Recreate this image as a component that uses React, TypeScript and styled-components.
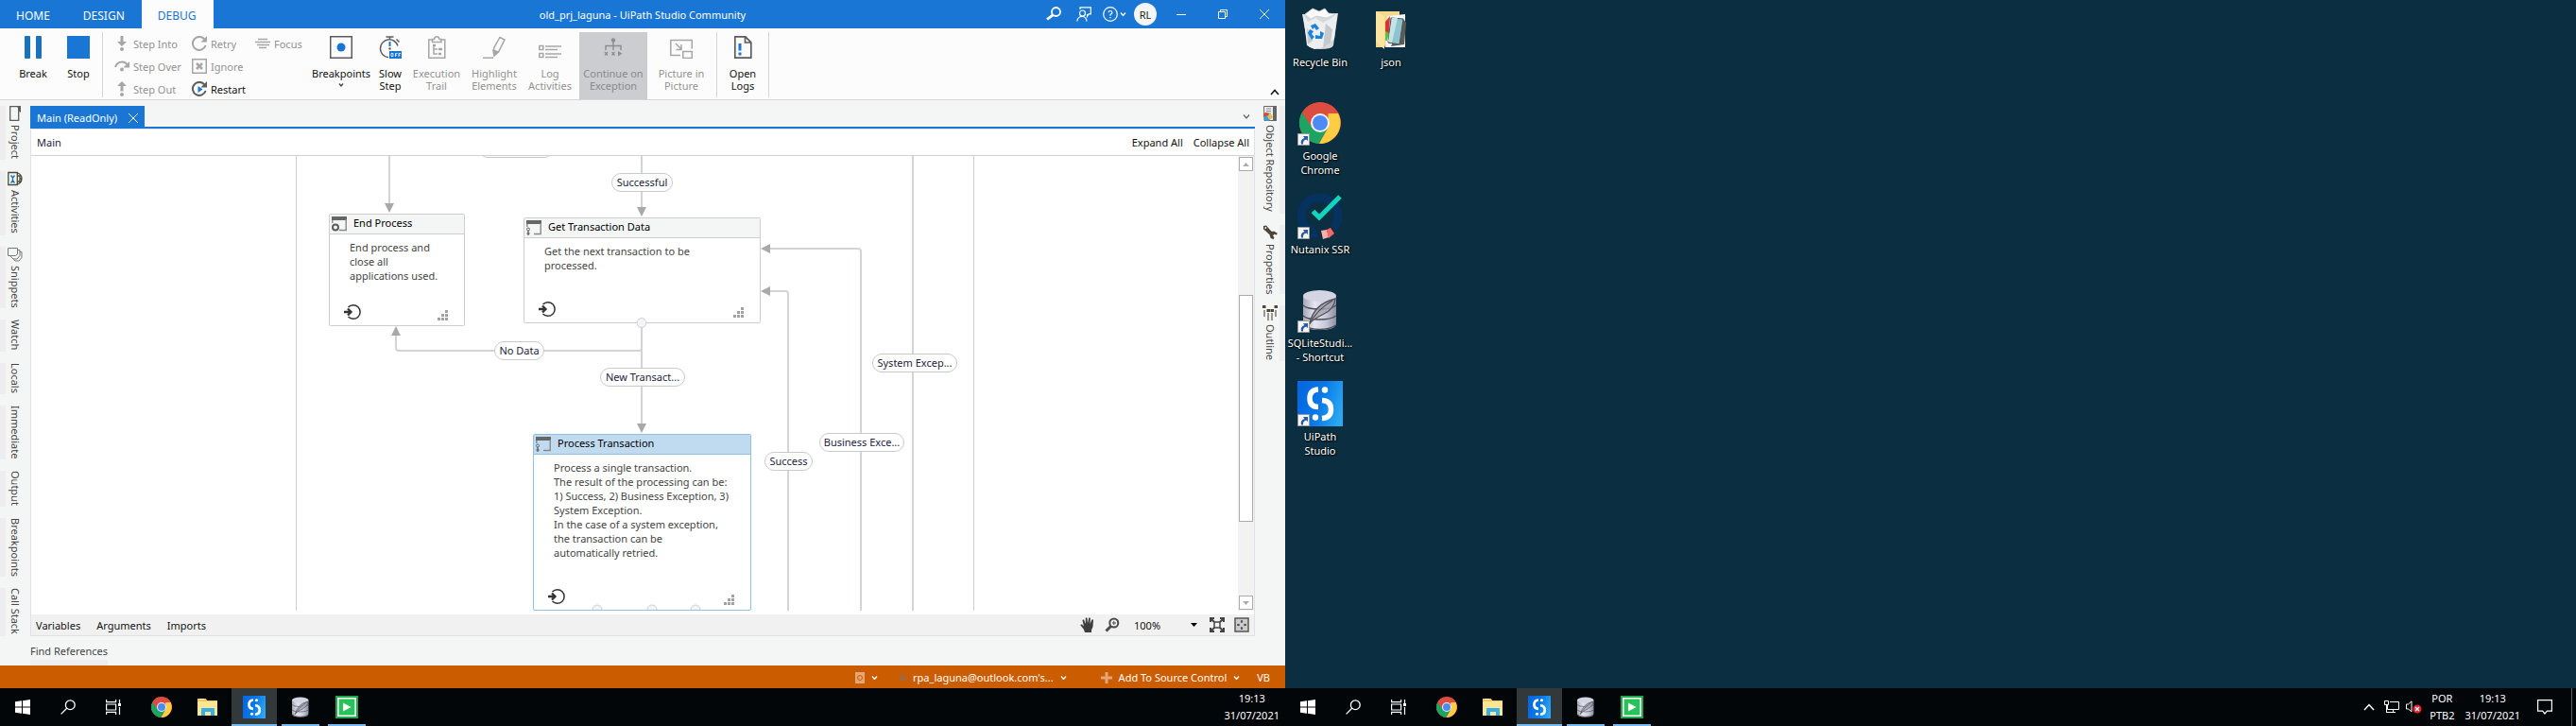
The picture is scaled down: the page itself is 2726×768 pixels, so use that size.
import React from "react";
import styled, { createGlobalStyle, css } from "styled-components";

const GlobalStyle = createGlobalStyle`
  *, *::before, *::after { box-sizing: border-box; }
  html, body, #root { height: 100%; margin: 0; }
  body, button, select { font-family: "Noto Sans", "Open Sans", sans-serif; font-size: 11px; line-height: 15px; }
  body { background: #0b2f40; color: #111; }
  button, select { margin: 0; padding: 0; border: 0; background: none; color: inherit; cursor: pointer; }
  svg { display: block; flex: none; }
  h1, h2, p, ul { margin: 0; padding: 0; font: inherit; list-style: none; }
`;

/* ---------- Shell ---------- */
const Screens = styled.div`display: flex; min-height: 100%; min-width: 1600px;`;
const Monitor = styled.div<{ $grow: number }>`
  flex: ${(p) => p.$grow} 1 0; min-width: 0; display: flex; flex-direction: column;
`;
const AppWindow = styled.main`
  flex: 1; min-height: 0; display: flex; flex-direction: column; background: #f4f6f6;
`;

/* ---------- Title bar ---------- */
const TitleBar = styled.header`
  display: grid; grid-template-columns: 1fr auto 1fr; align-items: stretch; height: 30px;
  background: #1976d4; color: #fff;
`;
const Tabs = styled.nav`display: flex;`;
const MenuTab = styled.button<{ $active?: boolean }>`
  padding: 2px 18px 0 17px; font-size: 12px;
  ${(p) => p.$active && css`background: #fcfcfc; color: #1976d4;`}
`;
const WindowTitle = styled.h1`align-self: center; padding-top: 1px;`;
const TitleTools = styled.div`display: flex; justify-content: flex-end; align-items: center;`;
const ToolButton = styled.button<{ $gap?: number }>`
  display: flex; align-items: center; gap: 2px; margin-right: ${(p) => p.$gap ?? 16}px;
`;
const Avatar = styled.button`
  width: 24px; height: 24px; border-radius: 50%; background: #f4f6f6; color: #222; margin-right: 4px;
`;
const WindowButton = styled.button`
  width: 44px; height: 30px; display: flex; align-items: center; justify-content: center;
`;

/* ---------- Ribbon ---------- */
const Ribbon = styled.div`
  display: flex; align-items: flex-start; height: 76px; padding: 4px 0 0 12px;
  background: #fcfcfc; border-bottom: 1px solid #d5d5d9;
`;
const BigButton = styled.button<{ $w: number; $off?: boolean; $pressed?: boolean }>`
  width: ${(p) => p.$w}px; height: 71px; padding-top: 4px; line-height: 13px;
  display: flex; flex-direction: column; align-items: center; gap: 9px; white-space: pre-line;
  color: ${(p) => (p.$off ? "#929292" : "#111")};
  ${(p) => p.$pressed && css`background: #cbcdd1; color: #8a8a8a; margin: 0 4px;`}
`;
const Caption = styled.span`display: flex; flex-direction: column; align-items: center; gap: 3px;`;
const Separator = styled.div<{ $lead?: number }>`
  width: 1px; height: 69px; background: #d5d5d9; margin-left: ${(p) => p.$lead ?? 0}px;
`;
const StepGrid = styled.div`
  display: grid; grid-auto-flow: column; grid-template-rows: repeat(3, 20px);
  grid-template-columns: 82px 67px 59px; row-gap: 4px; padding: 2px 0 0 12px;
`;
const SmallButton = styled.button<{ $off?: boolean }>`
  display: flex; align-items: center; gap: 4px; white-space: nowrap;
  color: ${(p) => (p.$off ? "#929292" : "#111")};
`;
const CollapseRibbon = styled.button`margin: 60px 6px 0 auto;`;

/* ---------- Workspace ---------- */
const Workspace = styled.div`flex: 1; min-height: 0; display: flex; padding-top: 6px;`;
const Rail = styled.ul<{ $side: "left" | "right" }>`
  flex: none; width: 32px; display: flex; flex-direction: column; gap: 12px;
  align-items: ${(p) => (p.$side === "left" ? "flex-start" : "flex-end")};
`;
const RailItem = styled.li<{ $side: "left" | "right"; $len: number }>`
  height: ${(p) => p.$len}px; width: 32px; display: flex; color: #444;
  ${(p) => p.$side === "left" ? css`border-left: 6px solid #ededef; padding-left: 2px;` : css`border-right: 6px solid #ededef; padding-left: 8px;`}
`;
const RailButton = styled.button`
  width: 16px; display: flex; flex-direction: column; align-items: center; gap: 4px;
`;
const RailText = styled.span`writing-mode: vertical-rl; white-space: nowrap;`;

const Center = styled.section`flex: 1; min-width: 0; display: flex; flex-direction: column;`;
const DocTabs = styled.div`
  display: flex; justify-content: space-between; align-items: stretch; height: 24px;
  border-bottom: 2px solid #1976d4;
`;
const DocTab = styled.button`
  display: flex; align-items: center; gap: 12px; padding: 3px 7px 0 7px; background: #1976d4; color: #fff;
`;
const TabMenu = styled.button`padding: 0 5px;`;
const Document = styled.div`
  flex: 1; min-height: 0; display: flex; flex-direction: column; background: #fff;
  border: 1px solid #dfe1e4; border-top-color: #e4e6e8;
`;
const Crumbs = styled.div`
  display: flex; align-items: center; height: 28px; padding: 0 5px 0 6px; gap: 11px;
  border-bottom: 1px solid #d0d2d6;
`;
const Crumb = styled.button`margin-right: auto; color: #23233c;`;
const CanvasRow = styled.div`flex: 1; min-height: 0; display: flex; padding-bottom: 4px;`;
const Canvas = styled.div`flex: 1; min-width: 0; position: relative; overflow: hidden;`;
const Wires = styled.svg`position: absolute; left: 0; top: 0; width: 100%; height: 100%;`;

const State = styled.article<{ $x: number; $y: number; $w: number; $h: number; $selected?: boolean }>`
  position: absolute; left: ${(p) => p.$x}px; top: ${(p) => p.$y}px;
  width: ${(p) => p.$w}px; height: ${(p) => p.$h}px;
  display: flex; flex-direction: column; background: #fff; border-radius: 2px;
  border: 1px solid ${(p) => (p.$selected ? "#8fc0e6" : "#ccced2")};
`;
const StateHead = styled.header<{ $selected?: boolean }>`
  display: flex; align-items: center; gap: 7px; height: 21px; padding: 0 2px; color: #000;
  background: ${(p) => (p.$selected ? "#c0dbf0" : "#f4f6f6")};
  border-bottom: 1px solid ${(p) => (p.$selected ? "#8fc0e6" : "#ccced2")};
`;
const StateTitle = styled.h2`padding-bottom: 3px;`;
const StateText = styled.p`flex: 1; padding: 6px 0 0 21px; color: #444; white-space: pre-line;`;
const StateFoot = styled.footer`
  display: flex; justify-content: space-between; align-items: flex-end; padding: 0 17px 5px 14px;
`;
const Pill = styled.span<{ $x: number; $y: number; $w: number }>`
  position: absolute; left: ${(p) => p.$x}px; top: ${(p) => p.$y}px; width: ${(p) => p.$w}px; height: 20px;
  border: 1px solid #c8cacd; border-radius: 10px; background: #fff; color: #23233c;
  text-align: center; line-height: 18px; white-space: nowrap;
`;
const Scrollbar = styled.div`
  width: 17px; padding: 1px; background: #f2f2f2; display: flex; flex-direction: column;
`;
const ScrollButton = styled.button`
  height: 15px; border: 1px solid #ababab; background: #fff; display: flex; align-items: center; justify-content: center;
`;
const ScrollTrack = styled.div`flex: 1; display: flex; flex-direction: column;`;
const TrackSpace = styled.div<{ $grow: number }>`flex: ${(p) => p.$grow} 1 0;`;
const Thumb = styled.div`flex: 239 1 0; background: #fff; border: 1px solid #ababab;`;

const Footer = styled.div`
  display: flex; align-items: center; height: 22px; padding: 0 5px; background: #f1f1f1; color: #111;
`;
const PanelTab = styled.button`margin-right: 17px;`;
const FootTools = styled.div`margin-left: auto; display: flex; align-items: center; gap: 10px;`;
const Zoom = styled.label`display: flex; align-items: center; margin: 0 3px 0 5px;`;
const ZoomSelect = styled.select`appearance: none; width: 60px; outline: none;`;
const FindBar = styled.div`display: flex; align-items: flex-end; height: 31px;`;
const FindTab = styled.button`height: 24px; padding-bottom: 2px; border-bottom: 6px solid #ededef; color: #444;`;

const StatusBar = styled.footer`
  display: flex; align-items: center; justify-content: flex-end; height: 24px; padding: 1px 16px 0 0;
  background: #cb5c00; color: #fff;
`;
const StatusItem = styled.button<{ $after: number }>`
  display: flex; align-items: center; gap: 7px; margin-right: ${(p) => p.$after}px;
`;

/* ---------- Desktop ---------- */
const Desktop = styled.section`flex: 1; min-height: 0; background: #0b2f40;`;
const IconGrid = styled.ul`
  display: grid; grid-auto-flow: column; grid-template-rows: repeat(5, 99px); grid-auto-columns: 75px;
`;
const Shortcut = styled.li<{ $column?: number }>`
  ${(p) => p.$column && css`grid-column: ${p.$column}; grid-row: 1;`}
  padding-top: 7px;
`;
const ShortcutButton = styled.button`
  width: 74px; display: flex; flex-direction: column; align-items: center; gap: 3px;
  color: #fff; text-shadow: 1px 1px 2px #000, 0 0 2px #000; white-space: pre;
`;
const IconBox = styled.span`position: relative; width: 48px; height: 48px;`;
const Badge = styled.svg`position: absolute; left: 0; bottom: 0;`;

/* ---------- Taskbar ---------- */
const Taskbar = styled.footer`display: flex; height: 40px; background: #020609; color: #fff;`;
const Apps = styled.nav`display: flex; gap: 1px;`;
const SystemApps = styled.div`display: flex; margin-right: 2px;`;
const TaskButton = styled.button<{ $state?: "open" | "active" }>`
  width: 48px; display: flex; align-items: center; justify-content: center;
  ${(p) => p.$state && css`
    background: linear-gradient(#76b9ed, #76b9ed) bottom / ${p.$state === "open" ? "40px" : "48px"} 2px no-repeat
      ${p.$state === "active" ? "#33383b" : ""};
  `}
`;
const Tray = styled.div`margin-left: auto; display: flex; align-items: center;`;
const TrayButton = styled.button<{ $after?: number }>`
  text-align: center; line-height: 18px; margin-right: ${(p) => p.$after ?? 0}px; white-space: pre;
`;
const ShowDesktop = styled.button`align-self: stretch; width: 5px; border-left: 1px solid #5d6062;`;

/* ---------- Icons ---------- */
const Chevron = ({ up, w = 8, color = "currentColor", sw = 1.3 }: { up?: boolean; w?: number; color?: string; sw?: number }) => (
  <svg width={w} height={w / 2 + 2} viewBox={`0 0 ${w} ${w / 2 + 2}`} fill="none" stroke={color} strokeWidth={sw}>
    <path d={up ? `M1 ${w / 2 + 1}L${w / 2} 1.5L${w - 1} ${w / 2 + 1}` : `M1 1.5L${w / 2} ${w / 2 + 1}L${w - 1} 1.5`} />
  </svg>
);
const G = "#a6a6a6";
const BreakIcon = () => <svg width="24" height="24"><rect x="3" width="6" height="24" rx="1" fill="#1a73b8" /><rect x="15" width="6" height="24" rx="1" fill="#1a73b8" /></svg>;
const StopIcon = () => <svg width="24" height="24"><rect width="24" height="24" fill="#1976d4" /></svg>;
const StepInto = () => <svg width="16" height="16" fill={G}><path d="M6.5 0h3v6H13l-5 5-5-5h3.500z" /><circle cx="8" cy="14" r="2" /></svg>;
const StepOut = () => <svg width="16" height="16" fill={G}><path d="M6.500 10.500h3V5H13L8 0 3 5h3.500z" /><circle cx="8" cy="14" r="2" /></svg>;
const StepOver = () => <svg width="16" height="16" fill={G}><path d="M1 9Q3 3.500 8 3.500T14 8" fill="none" stroke={G} strokeWidth="2" /><path d="M16 3v6.500h-6.500z" /><circle cx="8" cy="11.500" r="2" /></svg>;
const CircArrow = ({ color, play }: { color: string; play?: boolean }) => (
  <svg width="16" height="16"><path d="M13.200 3.300A7 7 0 1 0 14.600 10" fill="none" stroke={color} strokeWidth="2" /><path d="M16 0v6.500H9.500z" fill={color} />{play && <path d="M6.500 5l5 3.500-5 3.500z" fill="#1976d4" />}</svg>
);
const IgnoreIcon = () => <svg width="16" height="16" fill="none" stroke={G}><rect x=".75" y=".75" width="14.500" height="14.500" strokeWidth="1.500" /><path d="M5 5l6 6M11 5l-6 6" strokeWidth="2.500" /></svg>;
const FocusIcon = () => <svg width="16" height="16" stroke={G} strokeWidth="1.500"><path d="M3 3.500h10M0 6.500h16M2 9.500h13M4 12.500h8" /></svg>;
const BreakpointIcon = () => <svg width="24" height="24"><rect x=".75" y=".75" width="22.500" height="22.500" fill="none" stroke="#5c5c5c" strokeWidth="1.500" /><circle cx="12" cy="12" r="4.500" fill="#1976d4" /></svg>;
const SlowIcon = () => (
  <svg width="24" height="24" fill="none" stroke="#5c5c5c" strokeWidth="1.500">
    <path d="M7.500 1h8M11.500 1v3M18.500 3.500l3 3M10 22.800A9.500 9.500 0 1 1 20 10.500" /><path d="M11.500 6v5" stroke="#1976d4" strokeWidth="2" /><circle cx="11.500" cy="13.500" r="1.200" fill="#5c5c5c" stroke="none" />
    <rect x="11" y="16" width="13" height="8" fill="#1976d4" stroke="none" />
    <path d="M13 18.500h2v3h-2zM17.500 22v-3.500h2M17.500 20.200h1.500M21 22v-3.500h2M21 20.200h1.500" stroke="#fff" strokeWidth=".8" />
  </svg>
);
const TrailIcon = () => <svg width="24" height="24" fill="none" stroke={G} strokeWidth="1.500"><path d="M7 4H3.800v19.200h17V4H17M7.500 6.500V3.500h2Q10 .8 12.200.8T15 3.500h2v3zM9 9v10h4M9 14h4" /><path d="M8 10h3M14 14h4M14 19h3" strokeWidth="2.500" /></svg>;
const HighlightIcon = () => <svg width="24" height="24" fill="none" stroke={G} strokeWidth="1.500"><path d="M0 23.200h11" /><path d="M18 1.500l5 2.500-6.500 13-5-1.500.500-3.500z" /><path d="M11 15.500l4.500 2.500-3.500 3z" fill={G} /></svg>;
const LogIcon = () => <svg width="24" height="24" fill="none" stroke={G} strokeWidth="1.500"><path d="M.8 10.500h4v4h-4zM.8 18.500h4v4h-4zM7 11h17M7 14.500h13M7 19h17M7 22.500h13" /></svg>;
const TreeIcon = () => <svg width="24" height="24" fill="none" stroke="#8e8e8e" strokeWidth="1.500"><circle cx="12" cy="4.500" r="2.200" fill="#8e8e8e" stroke="none" /><path d="M12 5v10M4 15v-4.500h16V15" /><path d="M3 17l3 3.500M6 17l-3 3.500M10.500 17l3 3.500M13.500 17l-3 3.500" strokeWidth="1.200" /><path d="M17 16l4.500 2.700L17 21.500z" fill="#8e8e8e" stroke="none" /></svg>;
const PipIcon = () => <svg width="24" height="24" fill="none" stroke={G} strokeWidth="1.500"><path d="M11 20.500H.8v-16h22.500v9M6 8l6 6M12 9v5.500H6.500" /><rect x="13.800" y="16.500" width="9.500" height="7" /></svg>;
const LogsFile = () => <svg width="24" height="24" fill="none" stroke="#5c5c5c" strokeWidth="1.700"><path d="M3.800.8h11l6 6v16.400h-17zM14.500 1v6H21" /><path d="M9 8v7.500M9 17.500v3" stroke="#1976d4" strokeWidth="3" /></svg>;

const ProjectIcon = () => <svg width="16" height="16"><path d="M2.700.7h9v14.600h-9z" fill="#f4f6f6" stroke="#5c5c5c" strokeWidth="1.300" /><path d="M9 0h5v7l-3-2V2z" fill="#5c5c5c" /></svg>;
const ActivitiesIcon = () => <svg width="16" height="16" fill="none" stroke="#4d4a38" strokeWidth="1.300"><path d="M.8 1.500h9.500v13H.8zM10.500 2Q15 3.500 15 8t-4.500 6M10.500 5h2.500v6h-2.500M13 8h2.500" /><path d="M3.500 4.500l2 2.500v3l-2 2.500M7.500 4.500L5.500 7v3l2 2.500" stroke="#1976b8" strokeWidth="1.400" /></svg>;
const SnippetsIcon = () => <svg width="16" height="16" fill="#f4f6f6" stroke="#777" strokeWidth="1"><path d="M5 5.500h10v6l-3 3.500H8l-3-3z" /><path d="M3 3.500h10v6l-3 3.500H6l-3-3z" /><path d="M.5 1.500h10v6.500l-2 1.500h-8z" /></svg>;
const ObjectIcon = () => <svg width="16" height="16"><path d="M1.500.5H14v15H2z" fill="#eee" stroke="#666" /><path d="M11 0h4v16h-4z" fill="#666" /><path d="M4 3h5M4 5.500h5M4 8h5" stroke="#888" /><circle cx="4" cy="10" r="3" fill="#dc4a2c" /><circle cx="5" cy="13" r="3" fill="#3ba0d8" /><circle cx="8" cy="11.500" r="2.500" fill="#eebc45" /></svg>;
const WrenchIcon = () => <svg width="16" height="16"><path d="M1 1L4 .5l2.500 3 3 3.200 3 0 3.300 2-.8 1.800-2.500-.8-1.500 1.500 1.500 2-1 2-3-1.500-1-3.500L3.500 6.500 1 4.500z" fill="#4d4634" /><circle cx="3.300" cy="3" r="1" fill="#f4f6f6" /></svg>;
const OutlineIcon = () => <svg width="16" height="16" fill="#9b958a"><path d="M1 5h2v7H1zM5 8h2v8H5zM9 8h2v8H9zM13 5h2v7h-2z" /><path d="M0 0h3.500v3H0zM4.500 4H8v3H4.500zM8.500 4H12v3H8.500zM12.500 0H16v3h-3.500z" fill="#4d4634" /></svg>;

const WindowIcon = ({ gear }: { gear?: boolean }) => (
  <svg width="16" height="16"><path d="M0 0h16v4H0z" fill="#666" /><path d="M15.200 3v11.500H8M.8 4v3" fill="none" stroke="#888" strokeWidth="1.400" />
    {gear ? <circle cx="4" cy="11.500" r="3" fill="none" stroke="#5c5c5c" strokeWidth="2" /> : <><circle cx="2" cy="9.500" r="1.500" fill="none" stroke="#666" /><path d="M2 11v5M.5 14h3" stroke="#666" strokeWidth="1.400" /></>}
  </svg>
);
const EnterIcon = () => <svg width="20" height="18" fill="none" stroke="#333" strokeWidth="1.500"><path d="M5.500 4A7.300 7.300 0 1 1 5.500 14" /><path d="M1 9h7M5 5.500L8.500 9 5 12.500" strokeWidth="2.300" /></svg>;
const GripIcon = () => <svg width="11" height="11" fill="#a2a2a2"><path d="M8 0h3v3H8zM4 4h3v3H4zM8 4h3v3H8zM0 8h3v3H0zM4 8h3v3H4zM8 8h3v3H8z" /></svg>;

const HandIcon = () => <svg width="16" height="16" fill="#3e3e3e"><path d="M5 16l-1-3L.5 8.500q-.3-1.500 1.500-1L4 9.500 2.500 3.500q0-1.400 1.500-1L5.800 7V1q.8-1.500 1.700 0L8 6.500 9.200.8q1-1.200 1.700.2L10.500 7l2-4.500q1.300-.8 1.500.5L13.500 10 12 13.500V16z" /></svg>;
const ZoomIcon = () => <svg width="16" height="16" fill="none" stroke="#4a4a4a" strokeWidth="2"><circle cx="9.800" cy="6" r="4.500" /><path d="M8 6h4M9.800 4v4" strokeWidth="1" /><path d="M6.500 9.500L1.500 14.500" strokeWidth="3" /></svg>;
const FitIcon = () => <svg width="16" height="16" fill="none" stroke="#444" strokeWidth="1.500"><path d="M5 5h6v6H5z" /><path d="M1 5V1h4M11 1h4v4M15 11v4h-4M5 15H1v-4M1 1l4 4M15 1l-4 4M1 15l4-4M15 15l-4-4" strokeWidth="2" /></svg>;
const OverviewIcon = () => <svg width="16" height="16" fill="#ccc" stroke="#555"><path d="M1 1h14v14H1z" strokeWidth="1.500" /><path d="M8 3v3M8 10v3M3 8h3M10 8h3" strokeWidth="1.500" /><path d="M6.500 5L8 3l1.500 2zM6.500 11L8 13l1.500-2zM5 6.500L3 8l2 1.500zM11 6.500L13 8l-2 1.500z" fill="#555" stroke="none" /></svg>;

const Lens = () => (
  <svg width="16" height="16" fill="none" stroke="#fff" strokeWidth="1.300"><circle cx="10.300" cy="5.700" r="4.900" /><path d="M6.700 9.300L.6 15.400" /></svg>
);
const SearchBold = () => <svg width="16" height="16" fill="none" stroke="#fff" strokeWidth="1.800"><circle cx="10.500" cy="5.500" r="4.500" /><path d="M7.200 8.800L1 13.500" strokeWidth="2.800" /></svg>;
const FeedbackIcon = () => <svg width="16" height="16" fill="none" stroke="#fff" strokeWidth="1.200"><path d="M4 3V.8h11.300v7H13l-1.500 2.500V8" /><circle cx="6.500" cy="7" r="3" /><path d="M.8 15.500Q1.500 10.500 6 10.500T11 15.500" /></svg>;
const HelpIcon = () => <svg width="16" height="16" fill="none" stroke="#fff" strokeWidth="1.200"><circle cx="8" cy="8" r="7.300" /><path d="M6 6.300Q6.200 4.500 8 4.500T9.900 6.200Q9.900 7.300 8 8.500V9.800M8 11v1.200" /></svg>;

const ShortcutBadge = () => <Badge width="13" height="13"><path d="M.5.5h12v12H.5z" fill="#f4f4f4" stroke="#9a9a9a" /><path d="M4 11.500Q2.500 6.500 7.500 5L6 3h5v5L9.300 6.500Q5.500 7.500 6 11.500z" fill="#2a5aa0" /></Badge>;
const Chrome = ({ size }: { size: number }) => (
  <svg width={size} height={size} viewBox="0 0 48 48">
    <circle cx="24" cy="24" r="22" fill="#dc4c3f" />
    <path d="M4.900 13A22 22 0 0 0 23 46L32.500 28.500 24 25 15.500 29z" fill="#1da362" />
    <path d="M43.100 14A22 22 0 0 1 23 46L32.500 29V14z" fill="#ffcd42" /><path d="M24 14h19.100A22 22 0 0 0 4.900 13L15.500 29 24 24z" fill="#dc4c3f" />
    <circle cx="24" cy="24" r="10" fill="#f4f4f4" /><circle cx="24" cy="24" r="8" fill="#4c8bf5" />
  </svg>
);
const UiPath = ({ size, id }: { size: number; id: string }) => (
  <svg width={size} height={size} viewBox="0 0 48 48">
    <defs><linearGradient id={id} x1="0" y1=".3" x2="1" y2=".6"><stop offset="0" stopColor="#0567e2" /><stop offset=".5" stopColor="#0a78e8" /><stop offset="1" stopColor="#2aa8f2" /></linearGradient></defs>
    <path d="M0 0h48v48H0z" fill={`url(#${id})`} />
    <path d="M22 9Q13 9.500 13 18.500T22 27.500M26 20.500Q35.500 21 35.500 30T26 39.500" fill="none" stroke="#fff" strokeWidth="5.500" />
    <circle cx="29" cy="9.500" r="3.200" fill="#fff" /><circle cx="19" cy="38.500" r="3.200" fill="#fff" />
  </svg>
);
const Sqlite = ({ size, id }: { size: number; id: string }) => (
  <svg width={size} height={size} viewBox="0 0 48 48">
    <defs><linearGradient id={id}><stop offset="0" stopColor="#a4a7b4" /><stop offset=".35" stopColor="#e6e6f2" /><stop offset=".7" stopColor="#c6c7d8" /><stop offset="1" stopColor="#8c8ea0" /></linearGradient></defs>
    <path d="M6 9v29q0 7 17.500 7T41 38V9z" fill={`url(#${id})`} /><ellipse cx="23.500" cy="9" rx="17.500" ry="6" fill="#d4d4e2" />
    <path d="M6 19q4 4 17 4T41 19M6 30q4 4 17 4T41 30M7 40q6 4.500 16.500 4.500T40.500 40" fill="none" stroke="#4c4d55" strokeWidth="1.300" />
    <path d="M13 38Q17 18 40 12Q39 23 28 28Q22 31 16 35Z" fill="#a3a4ae" fillOpacity=".8" stroke="#505159" strokeWidth="1.300" /><path d="M12 40Q20 24 37 14" fill="none" stroke="#505159" strokeWidth="1.300" />
  </svg>
);
const RecycleBin = () => (
  <svg width="48" height="48">
    <path d="M5 8l38-1-5 34q-1 4-14 4-11 0-13-4z" fill="#d6d8da" /><path d="M6 8l5 8 8-4 8 5 8-4 7-6-3 27-9 8-12 3-8-4z" fill="#eceef0" /><path d="M30 18l7 6-2 14-8 6zM10 22l6 14-5 4z" fill="#c5c9cc" />
    <path d="M8 8l8-6 7 3 6-3 4 5 7 1-9 4-11-2-6 3z" fill="#fafafa" stroke="#c8cbcd" strokeWidth=".7" />
    <path d="M14 20l5-2 4 5-3 2-2-3-2 2zM11 28l2-4 4 2-2 3 3 3-3 3zM19 34v-4l5 1 0-5 4 2-2 6z" fill="#1783dc" />
  </svg>
);
const JsonFolder = () => (
  <svg width="48" height="48"><path d="M8 5h25v6L17 43H8z" fill="#f4d88b" /><path d="M20 10l19-2v35H18z" fill="#f3f5f6" /><path d="M18 16l5-6-1 18-4 6z" fill="#d8332c" /><path d="M18 26l4 2-2 8h-2z" fill="#5ac33c" /><path d="M37 13l3 4-2 23-14 2z" fill="#5f5a54" /><path d="M24 12l13 1-4 27-12-2z" fill="#8fc4cf" stroke="#4b5357" /><path d="M25 12l6 0-6 26-4-1z" fill="#c5e4e8" /><path d="M8 5l9 5v35l-9-8z" fill="#fbe3a0" /></svg>
);
const Nutanix = () => (
  <svg width="48" height="48"><path d="M12.500 39.500A19.500 19.500 0 1 1 38.500 36" fill="none" stroke="#06325f" strokeWidth="9" /><path d="M16 32l7 14-10 1z" fill="#06325f" /><path d="M16.500 18.500L23 25 45 3" fill="none" stroke="#0fd6bd" strokeWidth="5" /><path d="M25 39l6-1 2 8-6 2z" fill="#fbb0ab" /><path d="M31 38l4-2 4 6-6 5z" fill="#f4686b" /></svg>
);
const StartIcon = () => <svg width="16" height="16" fill="#fff"><path d="M0 2.300L7 1.300V7.500H0zM8 1.200L16 0v7.500H8zM0 8.500h7v6.200L0 13.700zM8 8.500h8V16l-8-1.200z" /></svg>;
const TaskView = () => <svg width="16" height="16" fill="none" stroke="#fff" strokeWidth="1.200"><path d="M.6 0v2.600h10V0M.6 16v-2.600h10V16M.6 5h10v6H.6zM14.500 0v4M14.500 8v8" /><path d="M13 4h3v3h-3z" fill="#fff" stroke="none" /></svg>;
const Folder = () => <svg width="24" height="24"><path d="M1 3h9l1 2h11v16H1z" fill="#f2c94f" /><path d="M1 6h21v15H1z" fill="#fee594" /><path d="M3 3.500h5" stroke="#fff" /><path d="M5 21v-7q0-1 1-1h12q1 0 1 1v7h-4v-4H9v4z" fill="#36aee8" /></svg>;
const Assistant = () => <svg width="24" height="24"><path d="M0 0h24v24H0z" fill="#1fa84a" /><path d="M2.800 2.800h18.400v18.400H2.800z" fill="#28c25b" stroke="#fff" strokeWidth="1.600" /><path d="M8 7.500l8.500 4.500L8 16.500z" fill="#fff" /></svg>;

/* ---------- Data ---------- */
const leftRail: { label: string; len: number; icon?: React.ReactNode }[] = [
  { label: "Project", len: 57, icon: <ProjectIcon /> },
  { label: "Activities", len: 68, icon: <ActivitiesIcon /> },
  { label: "Snippets", len: 65, icon: <SnippetsIcon /> },
  { label: "Watch", len: 34 },
  { label: "Locals", len: 33 },
  { label: "Immediate", len: 57 },
  { label: "Output", len: 38 },
  { label: "Breakpoints", len: 62 },
  { label: "Call Stack", len: 51 },
];
const rightRail = [
  { label: "Object Repository", len: 114, icon: <ObjectIcon /> },
  { label: "Properties", len: 73, icon: <WrenchIcon /> },
  { label: "Outline", len: 59, icon: <OutlineIcon /> },
];
const bigButtons = [
  { label: "Execution\nTrail", w: 58, icon: <TrailIcon /> },
  { label: "Highlight\nElements", w: 64, icon: <HighlightIcon /> },
  { label: "Log\nActivities", w: 54, icon: <LogIcon /> },
  { label: "Continue on\nException", w: 72, icon: <TreeIcon />, pressed: true },
  { label: "Picture in\nPicture", w: 64, icon: <PipIcon /> },
];
const states = [
  { title: "End Process", x: 315, y: 61, w: 144, h: 119, gear: true, text: "End process and\nclose all\napplications used." },
  { title: "Get Transaction Data", x: 521, y: 65, w: 251, h: 112, text: "Get the next transaction to be\nprocessed." },
  { title: "Process Transaction", x: 531, y: 294, w: 231, h: 187, selected: true, text: "Process a single transaction.\nThe result of the processing can be:\n1) Success, 2) Business Exception, 3)\nSystem Exception.\nIn the case of a system exception,\nthe transaction can be\nautomatically retried." },
];
const pills = [
  { label: "", x: 473, y: -18, w: 80 },
  { label: "Successful", x: 614, y: 18, w: 65 },
  { label: "No Data", x: 490, y: 196, w: 53 },
  { label: "New Transact...", x: 602, y: 224, w: 90 },
  { label: "System Excep...", x: 890, y: 209, w: 90 },
  { label: "Business Exce...", x: 834, y: 293, w: 90 },
  { label: "Success", x: 776, y: 313, w: 51 },
];

function SideRail({ side, items }: { side: "left" | "right"; items: { label: string; len: number; icon?: React.ReactNode }[] }) {
  return (
    <Rail $side={side}>
      {items.map((i) => (
        <RailItem key={i.label} $side={side} $len={i.len}>
          <RailButton>{i.icon}<RailText>{i.label}</RailText></RailButton>
        </RailItem>
      ))}
    </Rail>
  );
}

function StateMachine() {
  return (
    <Canvas>
      <Wires fill="none" stroke="#d2d4d7" strokeWidth="2">
        <path d="M280.500 0v481M997.500 0v481" strokeWidth="1" stroke="#cbcdd1" />
        <path d="M379 0v52M646 0v56M646 180v104M646 180v23q0 3-3 3H389q-3 0-3-3v-15M780 98h95q3 0 3 3v380M780 143h18q3 0 3 3v335M933 0v481" />
        <g fill="#a9a9a9" stroke="none">
          <path d="M374 50h10l-5 10zM641 54h10l-5 10zM641 283h10l-5 10zM381 190h10l-5-10zM782 93v10l-10-5zM782 138v10l-10-5z" />
        </g>
      </Wires>
      {states.map((s) => (
        <State key={s.title} $x={s.x} $y={s.y} $w={s.w} $h={s.h} $selected={s.selected}>
          <StateHead $selected={s.selected}><WindowIcon gear={s.gear} /><StateTitle>{s.title}</StateTitle></StateHead>
          <StateText>{s.text}</StateText>
          <StateFoot><EnterIcon /><GripIcon /></StateFoot>
        </State>
      ))}
      <Wires fill="#f4f6f6" stroke="#ccced2">
        <circle cx="646" cy="176.500" r="5" />
        <path d="M594 480a5 5 0 0 1 10 0M652 480a5 5 0 0 1 10 0M698 480a5 5 0 0 1 10 0" />
      </Wires>
      {pills.map((p) => <Pill key={p.label} $x={p.x} $y={p.y} $w={p.w}>{p.label}</Pill>)}
    </Canvas>
  );
}

function TaskbarApps({ id }: { id: string }) {
  return (
    <Apps>
      <SystemApps>
        <TaskButton aria-label="Start"><StartIcon /></TaskButton>
        <TaskButton aria-label="Search"><Lens /></TaskButton>
        <TaskButton aria-label="Task view"><TaskView /></TaskButton>
      </SystemApps>
      <TaskButton aria-label="Chrome"><Chrome size={24} /></TaskButton>
      <TaskButton aria-label="Explorer"><Folder /></TaskButton>
      <TaskButton aria-label="UiPath Studio" $state="active"><UiPath size={24} id={`${id}u`} /></TaskButton>
      <TaskButton aria-label="SQLiteStudio" $state="open"><Sqlite size={24} id={`${id}s`} /></TaskButton>
      <TaskButton aria-label="UiPath Assistant" $state="open"><Assistant /></TaskButton>
    </Apps>
  );
}

export default function App() {
  return (
    <>
      <GlobalStyle />
      <Screens>
        <Monitor $grow={1360}>
          <AppWindow>
            <TitleBar>
              <Tabs><MenuTab>HOME</MenuTab><MenuTab>DESIGN</MenuTab><MenuTab $active>DEBUG</MenuTab></Tabs>
              <WindowTitle>old_prj_laguna - UiPath Studio Community</WindowTitle>
              <TitleTools>
                <ToolButton aria-label="Search"><SearchBold /></ToolButton>
                <ToolButton aria-label="Feedback" $gap={12}><FeedbackIcon /></ToolButton>
                <ToolButton aria-label="Help" $gap={8}><HelpIcon /><Chevron w={7} /></ToolButton>
                <Avatar>RL</Avatar>
                <WindowButton aria-label="Minimize"><svg width="10" height="10" stroke="#fff"><path d="M0 5.500h10" /></svg></WindowButton>
                <WindowButton aria-label="Restore"><svg width="10" height="10" stroke="#fff" fill="none"><path d="M.5 2.500h7v7h-7zM2.500 2.500v-2h7v7h-2" /></svg></WindowButton>
                <WindowButton aria-label="Close"><svg width="10" height="10" stroke="#fff"><path d="M0 0l10 10M10 0L0 10" /></svg></WindowButton>
              </TitleTools>
            </TitleBar>
            <Ribbon>
              <BigButton $w={46}><BreakIcon />Break</BigButton>
              <BigButton $w={50}><StopIcon />Stop</BigButton>
              <Separator />
              <StepGrid>
                <SmallButton $off><StepInto />Step Into</SmallButton>
                <SmallButton $off><StepOver />Step Over</SmallButton>
                <SmallButton $off><StepOut />Step Out</SmallButton>
                <SmallButton $off><CircArrow color={G} />Retry</SmallButton>
                <SmallButton $off><IgnoreIcon />Ignore</SmallButton>
                <SmallButton><CircArrow color="#5c5c5c" play />Restart</SmallButton>
                <SmallButton $off><FocusIcon />Focus</SmallButton>
              </StepGrid>
              <BigButton $w={64}><BreakpointIcon /><Caption>Breakpoints<Chevron w={6} color="#444" /></Caption></BigButton>
              <BigButton $w={40}><SlowIcon />{"Slow\nStep"}</BigButton>
              {bigButtons.map((b) => (
                <BigButton key={b.label} $w={b.w} $off $pressed={b.pressed}>{b.icon}{b.label}</BigButton>
              ))}
              <Separator $lead={5} />
              <BigButton $w={54}><LogsFile />{"Open\nLogs"}</BigButton>
              <Separator />
              <CollapseRibbon aria-label="Collapse ribbon"><Chevron up w={10} sw={1.5} /></CollapseRibbon>
            </Ribbon>
            <Workspace>
              <SideRail side="left" items={leftRail} />
              <Center>
                <DocTabs>
                  <DocTab>Main (ReadOnly)<svg width="10" height="10" stroke="#fff"><path d="M0 0l10 10M10 0L0 10" /></svg></DocTab>
                  <TabMenu aria-label="Open documents"><Chevron color="#666" /></TabMenu>
                </DocTabs>
                <Document>
                  <Crumbs><Crumb>Main</Crumb><button>Expand All</button><button>Collapse All</button></Crumbs>
                  <CanvasRow>
                    <StateMachine />
                    <Scrollbar>
                      <ScrollButton aria-label="Scroll up"><svg width="7" height="4" fill="#ababab"><path d="M0 4h7L3.500 0z" /></svg></ScrollButton>
                      <ScrollTrack><TrackSpace $grow={132} /><Thumb /><TrackSpace $grow={78} /></ScrollTrack>
                      <ScrollButton aria-label="Scroll down"><svg width="7" height="4" fill="#ababab"><path d="M0 0h7L3.500 4z" /></svg></ScrollButton>
                    </Scrollbar>
                  </CanvasRow>
                  <Footer>
                    <PanelTab>Variables</PanelTab><PanelTab>Arguments</PanelTab><PanelTab>Imports</PanelTab>
                    <FootTools>
                      <button aria-label="Pan"><HandIcon /></button>
                      <button aria-label="Zoom"><ZoomIcon /></button>
                      <Zoom>
                        <ZoomSelect aria-label="Zoom level" defaultValue="100%"><option>100%</option></ZoomSelect>
                        <svg width="7" height="4"><path d="M0 0h7L3.500 4z" /></svg>
                      </Zoom>
                      <button aria-label="Fit to screen"><FitIcon /></button>
                      <button aria-label="Overview"><OverviewIcon /></button>
                    </FootTools>
                  </Footer>
                </Document>
                <FindBar><FindTab>Find References</FindTab></FindBar>
              </Center>
              <SideRail side="right" items={rightRail} />
            </Workspace>
            <StatusBar>
              <StatusItem $after={23} aria-label="Robot"><svg width="10" height="12"><path d="M0 0h10v12H0z" fill="#e2a677" /><circle cx="5" cy="6" r="2.500" fill="none" stroke="#cb5c00" /></svg><Chevron w={7} /></StatusItem>
              <StatusItem $after={36}><svg width="7" height="8"><circle cx="3.500" cy="4" r="3.500" fill="#a5673a" /></svg>rpa_laguna@outlook.com's...<Chevron w={7} /></StatusItem>
              <StatusItem $after={18}><svg width="12" height="12" stroke="#e2a677" strokeWidth="3"><path d="M0 6h12M6 0v12" /></svg>Add To Source Control<Chevron w={7} /></StatusItem>
              <span>VB</span>
            </StatusBar>
          </AppWindow>
          <Taskbar>
            <TaskbarApps id="a" />
            <Tray><TrayButton $after={6}>{"19:13\n31/07/2021"}</TrayButton></Tray>
          </Taskbar>
        </Monitor>

        <Monitor $grow={1366}>
          <Desktop>
            <IconGrid>
              <Shortcut><ShortcutButton><IconBox><RecycleBin /></IconBox>Recycle Bin</ShortcutButton></Shortcut>
              <Shortcut><ShortcutButton><IconBox><Chrome size={48} /><ShortcutBadge /></IconBox>{"Google\nChrome"}</ShortcutButton></Shortcut>
              <Shortcut><ShortcutButton><IconBox><Nutanix /><ShortcutBadge /></IconBox>Nutanix SSR</ShortcutButton></Shortcut>
              <Shortcut><ShortcutButton><IconBox><Sqlite size={48} id="ds" /><ShortcutBadge /></IconBox>{"SQLiteStudi...\n- Shortcut"}</ShortcutButton></Shortcut>
              <Shortcut><ShortcutButton><IconBox><UiPath size={48} id="du" /><ShortcutBadge /></IconBox>{"UiPath\nStudio"}</ShortcutButton></Shortcut>
              <Shortcut $column={2}><ShortcutButton><IconBox><JsonFolder /></IconBox>json</ShortcutButton></Shortcut>
            </IconGrid>
          </Desktop>
          <Taskbar>
            <TaskbarApps id="b" />
            <Tray>
              <TrayButton aria-label="Hidden icons" $after={10}><Chevron up w={12} sw={1.5} /></TrayButton>
              <TrayButton aria-label="Network" $after={7}><svg width="16" height="14" fill="none" stroke="#fff"><path d="M6 1.500h9.500v8H3.500V5M.5.500h4v4h-4zM2.500 4.500v8M2 12.500h10M9.500 9.500v3" /></svg></TrayButton>
              <TrayButton aria-label="Volume muted" $after={8}><svg width="17" height="14" fill="none"><path d="M.5 4h2L6 .800v11L2.500 9h-2z" stroke="#fff" /><circle cx="12" cy="9" r="4.500" fill="#e0242f" /><path d="M10 7l4 4M14 7l-4 4" stroke="#fff" strokeWidth="1.300" /></svg></TrayButton>
              <TrayButton $after={11}>{"POR\nPTB2"}</TrayButton>
              <TrayButton $after={18}>{"19:13\n31/07/2021"}</TrayButton>
              <TrayButton aria-label="Notifications" $after={20}><svg width="16" height="16" fill="none" stroke="#fff" strokeWidth="1.200"><path d="M.6.6h14.800v11.500h-5L8 15l-2.400-2.900h-5z" /></svg></TrayButton>
              <ShowDesktop aria-label="Show desktop" />
            </Tray>
          </Taskbar>
        </Monitor>
      </Screens>
    </>
  );
}
